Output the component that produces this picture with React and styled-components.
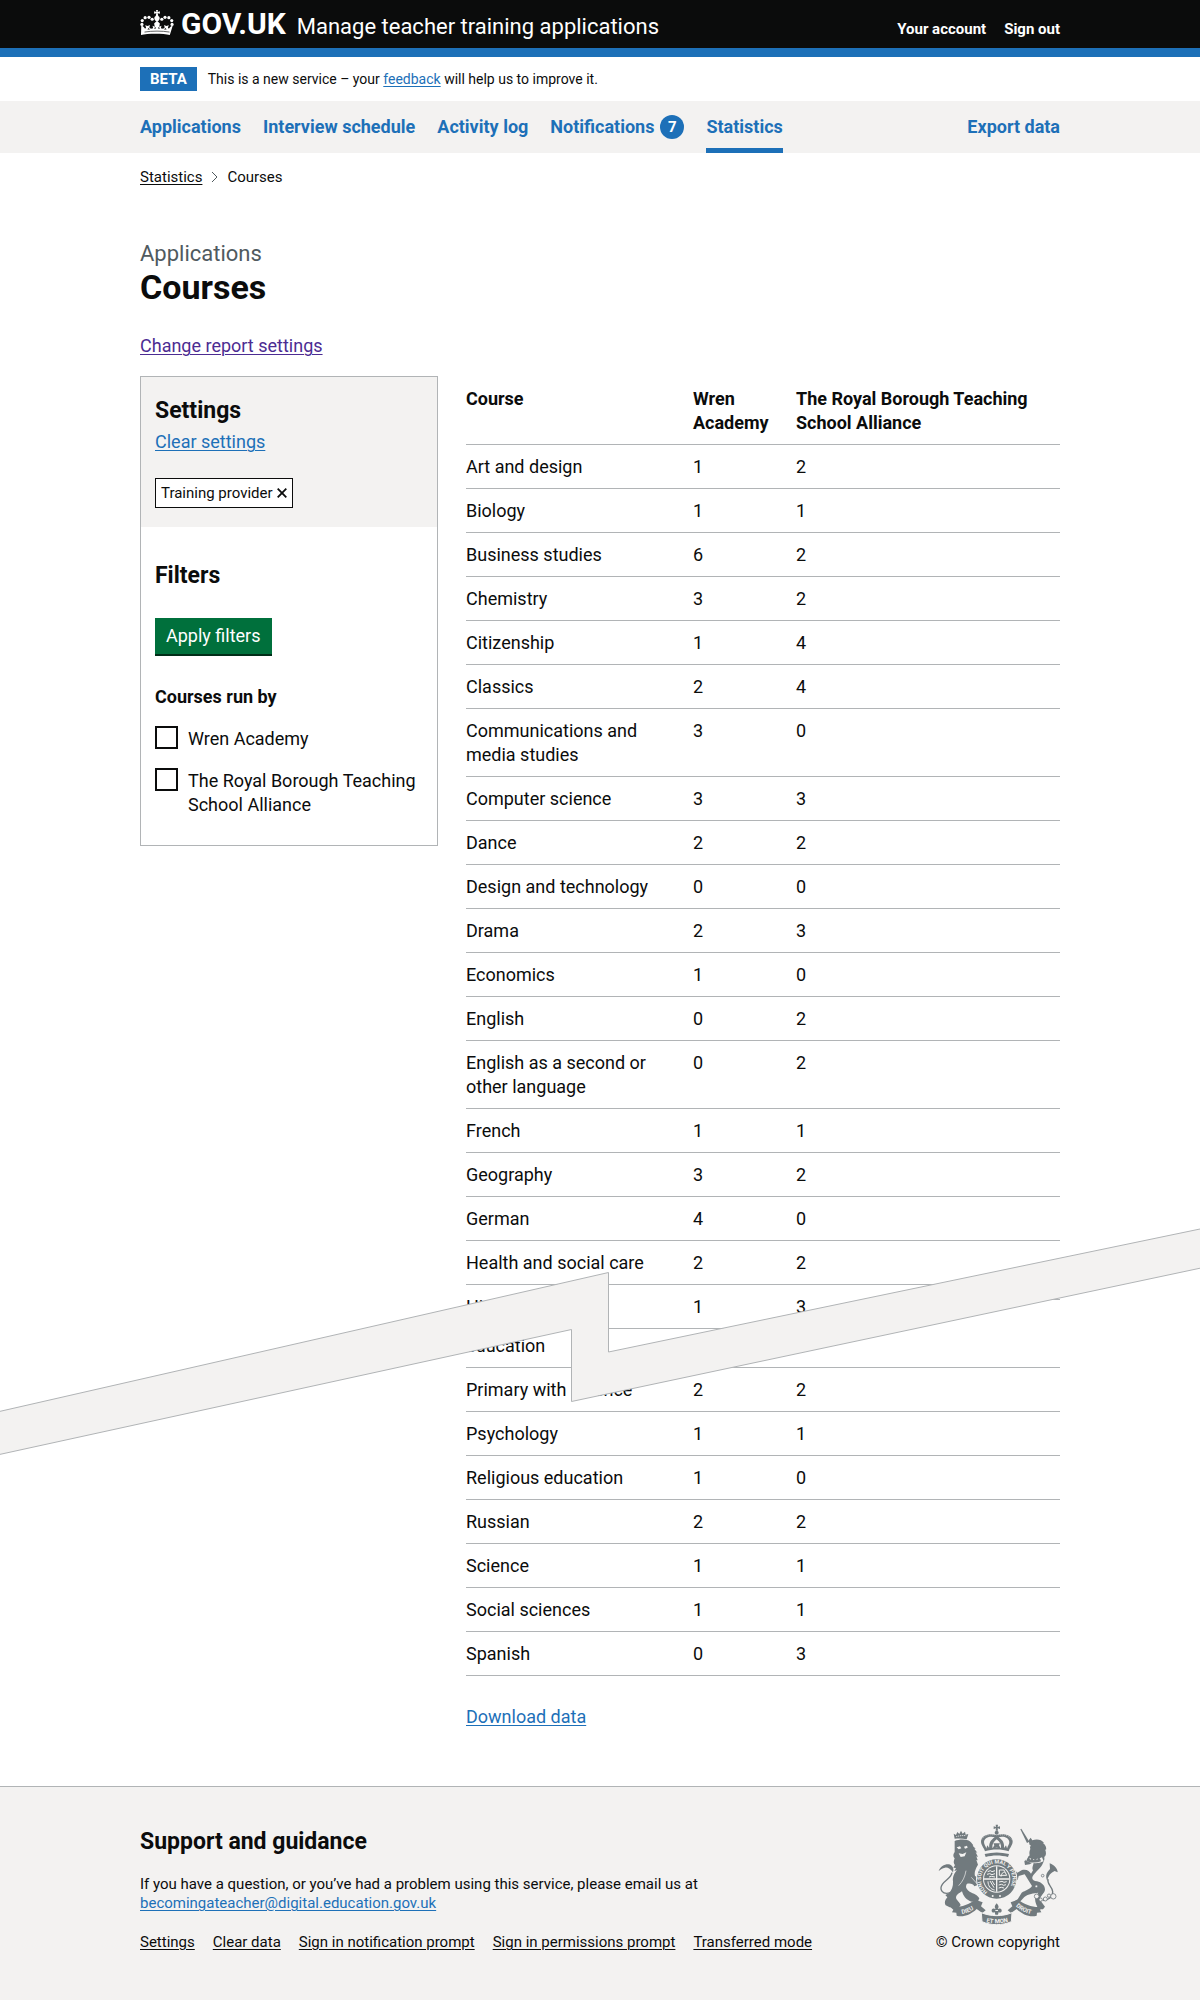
import React from "react";
import styled, { createGlobalStyle, css } from "styled-components";

const c = {
  ink: "#0b0c0c",
  muted: "#505a5f",
  blue: "#1d70b8",
  visited: "#4c2c92",
  green: "#00703c",
  greenDark: "#002d18",
  line: "#b1b4b6",
  panel: "#f3f2f1",
  crest: "#717a7e",
};

const GlobalStyle = createGlobalStyle`
  *, *::before, *::after { box-sizing: border-box; }
  body {
    margin: 0;
    background: ${c.panel};
    color: ${c.ink};
    font: 400 18px/24px Roboto, "Liberation Sans", sans-serif;
  }
`;

const Container = styled.div`
  max-width: 920px;
  margin: 0 auto;
`;

const Link = styled.a`
  color: ${(p) => p.$color || c.blue};
  text-decoration: underline;
  text-decoration-thickness: 1px;
  text-underline-offset: 2px;
`;

/* Header */

const Header = styled.header`
  background: ${c.ink};
  border-bottom: 9px solid ${c.blue};
  color: #fff;
`;

const HeaderRow = styled(Container)`
  display: flex;
  align-items: baseline;
  height: 48px;
  padding-top: 6px;
`;

const HomeLink = styled.a`
  display: inline-flex;
  align-items: baseline;
  gap: 7px;
  color: #fff;
  font-size: 30px;
  font-weight: 700;
  line-height: 36px;
  text-decoration: none;
`;

const ServiceLink = styled.a`
  margin-left: 11px;
  color: #fff;
  font-size: 22px;
  text-decoration: none;
`;

const AccountNav = styled.nav`
  display: flex;
  gap: 18px;
  margin-left: auto;
`;

const AccountLink = styled.a`
  color: #fff;
  font-size: 15px;
  font-weight: 700;
  text-decoration: none;
`;

/* Phase banner */

const Banner = styled.div`
  background: #fff;
`;

const BannerRow = styled(Container)`
  display: flex;
  align-items: center;
  gap: 11px;
  height: 44px;
  font-size: 14px;
`;

const PhaseTag = styled.strong`
  padding: 0 10px;
  background: ${c.blue};
  color: #fff;
  font-size: 15px;
  line-height: 24px;
`;

/* Primary navigation */

const PrimaryNav = styled.nav`
  background: ${c.panel};
`;

const NavRow = styled(Container)`
  display: flex;
  gap: 22px;
`;

const NavLink = styled.a`
  display: flex;
  align-items: center;
  gap: 6px;
  height: 52px;
  padding-top: 5px;
  border-bottom: 5px solid ${(p) => (p.$current ? c.blue : "transparent")};
  margin-left: ${(p) => (p.$end ? "auto" : 0)};
  color: ${c.blue};
  font-weight: 700;
  text-decoration: none;
`;

const Badge = styled.span`
  width: 24px;
  border-radius: 50%;
  background: ${c.blue};
  color: #fff;
  font-size: 15px;
  text-align: center;
`;

/* Page body */

const Page = styled.div`
  position: relative;
  padding-bottom: 57px;
  background: #fff;
`;

const Breadcrumbs = styled.nav`
  display: flex;
  align-items: center;
  gap: 9px;
  padding-top: 14px;
  font-size: 15px;
  line-height: 20px;
`;

const Caption = styled.span`
  display: block;
  margin-top: 53px;
  color: ${c.muted};
  font-size: 22px;
  line-height: 28px;
`;

const Title = styled.h1`
  margin: 0 0 28px;
  font-size: 34px;
  line-height: 38px;
`;

const Columns = styled.div`
  display: grid;
  grid-template-columns: 298px 1fr;
  align-items: start;
  gap: 28px;
  margin-top: 18px;
`;

const FilterPanel = styled.aside`
  border: 1px solid ${c.line};
`;

const SelectedFilters = styled.section`
  padding: 20px 14px 19px;
  background: ${c.panel};
`;

const FilterOptions = styled.form`
  padding: 35px 14px 28px;
`;

const Heading = styled.h2`
  margin: 0 0 ${(p) => p.$gap}px;
  font-size: 23px;
  line-height: 28px;
`;

const FilterTag = styled.a`
  display: flex;
  align-items: center;
  gap: 4px;
  width: fit-content;
  height: 30px;
  margin-top: 24px;
  padding: 0 5px;
  border: 1px solid ${c.ink};
  background: #fff;
  color: ${c.ink};
  font-size: 15px;
  text-decoration: none;
`;

const ApplyButton = styled.button`
  display: block;
  height: 36px;
  padding: 0 11px;
  border: 0;
  background: ${c.green};
  box-shadow: 0 2px 0 ${c.greenDark};
  color: #fff;
  font: inherit;
`;

const Fieldset = styled.fieldset`
  display: grid;
  gap: 17px;
  margin: 31px 0 0;
  padding: 0;
  border: 0;
`;

const Legend = styled.legend`
  padding: 0 0 17px;
  font-weight: 700;
`;

const CheckItem = styled.label`
  display: flex;
  align-items: flex-start;
  gap: 10px;
`;

const CheckText = styled.span`
  padding-top: 1px;
`;

const Checkbox = styled.input`
  flex: none;
  width: 23px;
  height: 23px;
  margin: 0;
  appearance: none;
  border: 2px solid ${c.ink};
  background: #fff;

  &:checked {
    background: ${c.ink};
    box-shadow: inset 0 0 0 3px #fff;
  }
`;

/* Results */

const Table = styled.table`
  width: 100%;
  margin-bottom: 29px;
  border-spacing: 0;
  table-layout: fixed;
`;

const Col = styled.col`
  width: ${(p) => p.$w};
`;

const cell = css`
  padding: 10px 20px 9px 0;
  border-bottom: 1px solid ${c.line};
  text-align: left;
  vertical-align: top;

  &:first-child {
    padding-right: 32px;
  }
`;

const HeadCell = styled.th`
  ${cell}
  padding-top: 11px;
  &:nth-child(2) {
    padding-right: 8px;
  }
`;

const RowHead = styled.th`
  ${cell}
  padding-top: ${(p) => (p.$tight ? 5 : 10)}px;
  font-weight: 400;
`;

const Cell = styled.td`
  ${cell}
  ${(p) => p.$open && "border-bottom-color: transparent;"}
`;

const Tear = styled.svg`
  position: absolute;
  top: 1075px;
  left: 0;
  width: 100%;
  height: 228px;
  pointer-events: none;
`;

/* Footer */

const Footer = styled.footer`
  border-top: 1px solid ${c.line};
  background: ${c.panel};
  font-size: 15px;
  line-height: 19px;
`;

const FooterRow = styled(Container)`
  display: flex;
  align-items: flex-end;
  justify-content: space-between;
  padding: 37px 0 48px;
`;

const Paragraph = styled.p`
  margin: 0 0 20px;
`;

const FooterLinks = styled.nav`
  display: flex;
  gap: 18px;
`;

const Copyright = styled.div`
  display: grid;
  justify-items: center;
  gap: 8px;
`;

const before = [
  ["Art and design", 1, 2],
  ["Biology", 1, 1],
  ["Business studies", 6, 2],
  ["Chemistry", 3, 2],
  ["Citizenship", 1, 4],
  ["Classics", 2, 4],
  ["Communications and media studies", 3, 0],
  ["Computer science", 3, 3],
  ["Dance", 2, 2],
  ["Design and technology", 0, 0],
  ["Drama", 2, 3],
  ["Economics", 1, 0],
  ["English", 0, 2],
  ["English as a second or other language", 0, 2],
  ["French", 1, 1],
  ["Geography", 3, 2],
  ["German", 4, 0],
  ["Health and social care", 2, 2],
];

const after = [
  ["Primary with science", 2, 2],
  ["Psychology", 1, 1],
  ["Religious education", 1, 0],
  ["Russian", 2, 2],
  ["Science", 1, 1],
  ["Social sciences", 1, 1],
  ["Spanish", 0, 3],
];

const Row = ({ data: [name, wren, royal], tight, open }) => (
  <tr>
    <RowHead scope="row" $tight={tight}>{name}</RowHead>
    <Cell>{wren}</Cell>
    <Cell $open={open}>{royal}</Cell>
  </tr>
);

const dotsLeft = [[19, 63], [20, 51], [29, 42], [41, 41], [51, 47]];

const Crown = () => (
  <svg width="34" height="25" viewBox="13 15 106 78" overflow="visible" fill="#fff" aria-hidden="true">
    {dotsLeft.map(([x, y]) => (
      <React.Fragment key={x}>
        <circle cx={x} cy={y} r="5" />
        <circle cx={132 - x} cy={y} r="5" />
      </React.Fragment>
    ))}
    <path d="M63 18h6l-1 6 7-2v8l-7-2 2 9c5 2 6 9 2 13l-3 3h-6l-3-3c-4-4-3-11 2-13l2-9-7 2v-8l7 2z" />
    <path d="M17 67c5 0 9 4 12 10l3-4-3-7 8 2 7-3-2 8 5 4 7-2-2-8 7 3-2-10 9-8 9 8-2 10 7-3-2 8 7 2 5-4-2-8 7 3 8-2-3 7 3 4c3-6 7-10 12-10l-9 29c-20-5-70-5-90 0z" />
    <path d="M27 87c22-4 56-4 78 0" fill="none" stroke={c.ink} strokeWidth="2" />
    <path d="M36 79l4-5 4 5zM88 79l4-5 4 5zM56 76l5-5 2 5zM69 76l2-5 5 5z" fill={c.ink} />
  </svg>
);

const Crest = () => (
  <svg width="120" height="101" viewBox="20 10 360 303" fill={c.crest} role="img" aria-label="Royal coat of arms">
    {/* Imperial crown */}
    <path d="M193 12h7l-1 7 7-2v8l-7-2 1 7h-7l1-7-7 2v-8l7 2z" />
    <circle cx="196" cy="36" r="6" />
    <path d="M196 44C178 36 150 42 149 62c0 12 8 18 12 30 22-7 50-7 71 0 4-12 12-18 12-30-1-20-30-26-48-18z" />
    <path d="M190 50c-12-5-31 0-32 14 0 8 5 12 7 20l9-2c-2-14 4-24 16-32zM202 50c12-5 31 0 32 14 0 8-5 12-7 20l-9-2c2-14-4-24-16-32z" fill={c.panel} />
    <path d="M196 56c-10 8-14 16-13 26h26c1-10-3-18-13-26z" fill={c.panel} />
    <path d="M164 86l4-12 5 7 6-5 5 7 5-9-3-6h20l-3 6 5 9 5-7 6 5 5-7 4 12-32-5z" />
    <path d="M165 96c20-5 42-5 62 0" fill="none" stroke={c.panel} strokeWidth="3" strokeDasharray="5 3" />
    <path d="M160 100c24-6 48-6 73 0l-3 9c-22-6-46-6-67 0z" />
    <path d="M152 56c8-12 22-16 38-12M240 56c-8-12-22-16-38-12" fill="none" stroke={c.panel} strokeWidth="2" strokeDasharray="2 4" />

    {/* Lion */}
    <path d="M70 54l-3-15 7 4 4-9 6 6 5-10 5 9 7-6 2 9 8-2-5 16c-12-3-24-2-36-2z" />
    <path d="M75 48c9-3 20-4 30-3" fill="none" stroke={c.panel} strokeWidth="3" strokeDasharray="3 3" />
    <path d="M70 61c12-5 28-6 40-2 8 4 12 10 16 15l-2 1 9 9-4 0 9 12-5-1 7 14-5-2 4 12-4-1 5 14c-6 10-12 22-9 34 7 4 16 8 18 18l6 8-7 1-3 9-6-9-10 4c-3-8-12-10-22-8-6 9-2 16 8 24 12 6 24 10 29 20l-4 9-19 1c-16-4-25-17-29-31-9 6-17 10-18 19 1 8 11 12 14 22l-5 7H55l-12-6c-5-9-1-17 5-24l-6-7 10-5c9-9 14-21 13-35-2-14 4-26 12-34l-8 2 5-9-8-1 5-8c-6-6-3-14-1-20-6-6-4-14 0-19z" />
    <path d="M76 80l10-3 4 6-8 3zM98 78l9-3 2 6-8 3zM82 98l12 2 11-5-5 12-12 2z" fill={c.panel} />
    <path d="M104 150c-3 18-10 33-22 45M120 170l18 20" fill="none" stroke={c.panel} strokeWidth="2" />
    <path d="M57 216c-24 8-34-10-24-25 9-13 27-19 29-35" fill="none" stroke={c.crest} strokeWidth="4" />
    <path d="M22 151c4-13 18-21 30-20 11 2 17 12 13 24-8-10-16-16-24-14-8 1-13 5-19 10z" />

    {/* Unicorn */}
    <path d="M267 26l3-2 24 39-7 4z" />
    <path d="M292 59l6-8 5 8c12-5 28-3 35 8l-3 1c8 5 11 13 9 20l-3-2c4 9 4 17-1 23l-2-3c3 9 0 16-3 21-6 16-22 25-31 40-4 9 2 15 13 15 13 3 24 12 24 25-2 12-16 19-15 31l15 20-6 8h-14c-5-12-12-25-9-36l9-14c-14 2-30 3-42 13l-13 14 4 12-18-3-5-9 12-7 12-20c11-7 24-9 31-20l-22-35-18 5-3 12-10-4 4-10-12-8 8-9 9 9 14-8c16-3 22 4 27 11l6-10c-5-8 2-15 2-25l-12 7-14 2-2-11 16-18c-2-7 0-14 2-19z" />
    <path d="M284 106c14 11 31 12 48 4l5 12c-17 8-37 8-55-3z" fill={c.panel} />
    <path d="M287 115l5-8 5 11 5-10 5 11 6-10 4 10 5-11 5 8 2 6c-13 5-29 5-44-1z" />
    <circle cx="295" cy="75" r="3" fill={c.panel} />
    <path d="M334 240c19-2 31-12 30-27-1-17-18-21-14-38" fill="none" stroke={c.crest} strokeWidth="4" />
    <path d="M348 181c-8-16-1-27 8-36l-1-17c15 5 24 17 24 27l-9-4c-11 5-20 14-22 30z" />
    <g fill={c.panel} stroke={c.crest} strokeWidth="2.5">
      <circle cx="316" cy="227" r="7" />
      <circle cx="328" cy="237" r="5" />
      <circle cx="342" cy="235" r="6" />
      <circle cx="353" cy="225" r="5" />
      <circle cx="366" cy="227" r="8" />
      <circle cx="315" cy="197" r="4" />
      <circle cx="334" cy="165" r="4" />
    </g>

    {/* Garter and shield */}
    <circle cx="196" cy="175" r="62" fill={c.panel} />
    <circle cx="196" cy="175" r="59" />
    <circle cx="196" cy="175" r="41" fill={c.panel} />
    <circle cx="196" cy="175" r="38" />
    <path id="garter" d="M172 216a47 47 0 1 1 48 0" fill="none" />
    <text fill={c.panel} fontSize="16" fontWeight="700" fontFamily="Roboto, sans-serif">
      <textPath href="#garter" startOffset="4">HONI SOIT QUI MAL Y PENSE</textPath>
    </text>
    <path d="M196 137v76M158 175h76" stroke={c.panel} strokeWidth="4" />
    <g fill="none" stroke={c.panel} strokeWidth="3">
      <path d="M169 153l8-3 5 3 9-3M167 161l8-2 7 3 9-3M173 169l7-2 11 2" />
      <path d="M203 184l9-2 6 3 8-2M202 193l9-2 6 3 7-2M202 202l8-2 8 2" />
      <path d="M204 148h14l8 16h-22zM209 168c2-10 5-14 11-13" />
      <path d="M170 182c0 14 8 24 20 26M176 181l12 20M182 181l8 12" />
    </g>
    <circle cx="184" cy="226" r="3" fill={c.panel} />
    <circle cx="206" cy="226" r="3" fill={c.panel} />

    {/* Motto ribbons */}
    <path d="M56 258c28 5 54-6 76-21l22 8-5 12 14 12-10 8-17-12c-18 18-42 26-60 20l-1-9-13-1 4-8z" />
    <path d="M336 258c-28 5-54-6-76-21l-22 8 5 12-14 12 10 8 17-12c18 18 42 26 60 20l1-9 13-1-4-8z" />
    <path d="M150 276c28 12 64 12 92 0l-2 27c-28 12-60 12-88 0z" stroke={c.panel} strokeWidth="3" />
    <path id="motto-left" d="M86 281c20-2 36-10 51-22" fill="none" />
    <path id="motto-mid" d="M156 302c26 8 54 8 80 0" fill="none" />
    <path id="motto-right" d="M253 257c15 13 32 21 54 25" fill="none" />
    <g fill={c.panel} fontSize="18" fontWeight="700" fontFamily="Roboto, sans-serif">
      <text><textPath href="#motto-left" startOffset="6">DIEU</textPath></text>
      <text><textPath href="#motto-mid" startOffset="9">ET MON</textPath></text>
      <text><textPath href="#motto-right" startOffset="0">DROIT</textPath></text>
    </g>
    <path d="M196 248c7 7 7 12 3 18 6-5 13-3 12 5-1 5-6 6-9 3l-2 8h-8l-2-8c-3 3-8 2-9-3-1-8 6-10 12-5-4-6-4-11 3-18z" />
    <path d="M192 268h8v3h-8z" fill={c.panel} />
  </svg>
);

export default function App() {
  return (
    <>
      <GlobalStyle />
      <Header>
        <HeaderRow>
          <HomeLink href="#home"><Crown />GOV.UK</HomeLink>
          <ServiceLink href="#service">Manage teacher training applications</ServiceLink>
          <AccountNav aria-label="Account">
            <AccountLink href="#account">Your account</AccountLink>
            <AccountLink href="#sign-out">Sign out</AccountLink>
          </AccountNav>
        </HeaderRow>
      </Header>

      <Banner>
        <BannerRow>
          <PhaseTag>BETA</PhaseTag>
          <span>
            This is a new service – your <Link href="#feedback">feedback</Link> will help us to improve it.
          </span>
        </BannerRow>
      </Banner>

      <PrimaryNav aria-label="Primary">
        <NavRow>
          <NavLink href="#applications">Applications</NavLink>
          <NavLink href="#interviews">Interview schedule</NavLink>
          <NavLink href="#activity">Activity log</NavLink>
          <NavLink href="#notifications">Notifications <Badge>7</Badge></NavLink>
          <NavLink href="#statistics" $current aria-current="page">Statistics</NavLink>
          <NavLink href="#export" $end>Export data</NavLink>
        </NavRow>
      </PrimaryNav>

      <Page>
        <Container>
          <Breadcrumbs aria-label="Breadcrumb">
            <Link href="#statistics" $color={c.ink}>Statistics</Link>
            <svg width="7" height="12" viewBox="0 0 7 12" fill="none" stroke={c.muted} aria-hidden="true">
              <path d="M1 1l5 5-5 5" />
            </svg>
            <span>Courses</span>
          </Breadcrumbs>

          <main>
            <Caption>Applications</Caption>
            <Title>Courses</Title>
            <Link href="#report" $color={c.visited}>Change report settings</Link>

            <Columns>
              <FilterPanel>
                <SelectedFilters>
                  <Heading $gap={5}>Settings</Heading>
                  <Link href="#clear">Clear settings</Link>
                  <FilterTag href="#remove-provider">
                    Training provider
                    <svg width="10" height="10" viewBox="0 0 10 10" stroke={c.ink} strokeWidth="1.8" aria-hidden="true">
                      <path d="M0.7 0.7l8.6 8.6M9.3 0.7l-8.6 8.6" />
                    </svg>
                  </FilterTag>
                </SelectedFilters>
                <FilterOptions>
                  <Heading $gap={28}>Filters</Heading>
                  <ApplyButton type="button">Apply filters</ApplyButton>
                  <Fieldset>
                    <Legend>Courses run by</Legend>
                    <CheckItem htmlFor="wren">
                      <Checkbox type="checkbox" id="wren" />
                      <CheckText>Wren Academy</CheckText>
                    </CheckItem>
                    <CheckItem htmlFor="royal">
                      <Checkbox type="checkbox" id="royal" />
                      <CheckText>The Royal Borough Teaching School Alliance</CheckText>
                    </CheckItem>
                  </Fieldset>
                </FilterOptions>
              </FilterPanel>

              <div>
                <Table>
                  <colgroup>
                    <Col $w="227px" />
                    <Col $w="103px" />
                    <Col $w="auto" />
                  </colgroup>
                  <thead>
                    <tr>
                      <HeadCell scope="col">Course</HeadCell>
                      <HeadCell scope="col">Wren Academy</HeadCell>
                      <HeadCell scope="col">The Royal Borough Teaching School Alliance</HeadCell>
                    </tr>
                  </thead>
                  <tbody>
                    {before.map((r) => <Row key={r[0]} data={r} />)}
                    <Row data={["History", 1, 3]} open />
                    <Row data={["education", "", ""]} tight />
                    {after.map((r) => <Row key={r[0]} data={r} />)}
                  </tbody>
                </Table>
                <Link href="#download">Download data</Link>
              </div>
            </Columns>
          </main>
        </Container>
        <Tear viewBox="0 0 1200 228" preserveAspectRatio="none" aria-hidden="true">
          <path d="M1050 71.5h10" stroke={c.line} />
          <path
            d="M-2 183.8L608.5 44.5V124L1202 0.6V39.8L571.5 173.5V101.5L-2 226.8Z"
            fill={c.panel}
            stroke={c.line}
          />
        </Tear>
      </Page>

      <Footer>
        <FooterRow>
          <div>
            <Heading as="h2" $gap={19}>Support and guidance</Heading>
            <Paragraph>
              If you have a question, or you’ve had a problem using this service, please email us at
              <br />
              <Link href="mailto:becomingateacher@digital.education.gov.uk">becomingateacher@digital.education.gov.uk</Link>
            </Paragraph>
            <FooterLinks aria-label="Support">
              <Link href="#settings" $color={c.ink}>Settings</Link>
              <Link href="#clear-data" $color={c.ink}>Clear data</Link>
              <Link href="#notification-prompt" $color={c.ink}>Sign in notification prompt</Link>
              <Link href="#permissions-prompt" $color={c.ink}>Sign in permissions prompt</Link>
              <Link href="#transferred" $color={c.ink}>Transferred mode</Link>
            </FooterLinks>
          </div>
          <Copyright>
            <Crest />
            <span>© Crown copyright</span>
          </Copyright>
        </FooterRow>
      </Footer>
    </>
  );
}
